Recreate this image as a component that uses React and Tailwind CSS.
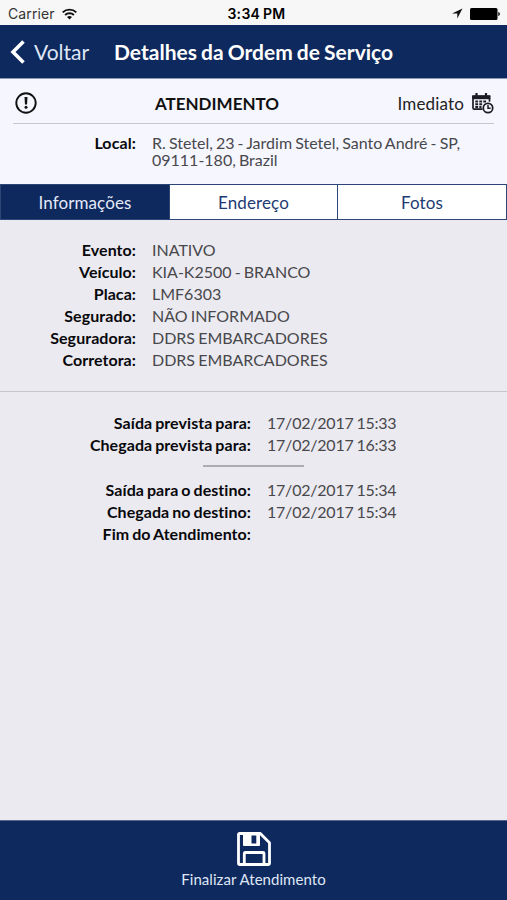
import React, { useState } from "react";

const StatusBar = () => (
  <div className="h-[25px] shrink-0 grid grid-cols-[1fr_auto_1fr] items-center pl-2 pr-[7px] pt-[2px] bg-[#f7f7f7] font-['Inter','Liberation_Sans',sans-serif] text-[14px] leading-4 text-black">
    <div className="flex items-center gap-[7px]">
      <span className="text-[#333] tracking-[0.1px]">Carrier</span>
      <svg width="15" height="12" viewBox="0 0 15 12" fill="none" stroke="#111" strokeWidth="1.9">
        <path d="M.7 4.4a9.8 9.8 0 0 1 13.6 0" />
        <path d="M3.1 7a6.4 6.4 0 0 1 8.8 0" />
        <path d="M7.5 11.6 5 9.1a3.6 3.6 0 0 1 5 0z" fill="#111" stroke="none" />
      </svg>
    </div>
    <span className="text-center pl-[5px] whitespace-nowrap font-semibold tracking-[0.3px]">3:34 PM</span>
    <div className="flex items-center justify-end gap-[7px]">
      <svg width="11" height="11" viewBox="0 0 11 11">
        <path d="M10.5.5 0 5.600h5.300v5z" fill="#111" />
      </svg>
      <svg width="30" height="12" viewBox="0 0 30 12">
        <rect x="0" y="0" width="27.5" height="12" rx="1.5" fill="#000" />
        <path d="M28.3 4c2 .4 2 3.600 0 4z" fill="#000" />
      </svg>
    </div>
  </div>
);

const CalendarClock = () => (
  <svg width="22" height="21" viewBox="0 0 22 21" fill="none" stroke="#1c1c22">
    <path d="M10.500 16.200H2.300a1.300 1.300 0 0 1-1.300-1.300V3.500h16.500v5.200" strokeWidth="1.7" />
    <path d="M.3 2.200h18v4H.3z" fill="#1c1c22" stroke="none" />
    <path d="M4.500 0v4M14 0v4" strokeWidth="2.200" />
    <path d="M3.300 8.500h2.800M7.300 8.500h2.800M11.300 8.500h2.800M3.300 11.200h2.800M7.300 11.200h2.800M3.300 13.900h2.800M7.300 13.900h2.200" strokeWidth="2" />
    <circle cx="16" cy="15" r="4.700" strokeWidth="1.700" />
    <path d="M16 12v3.200h2.600" strokeWidth="1.500" />
  </svg>
);

const SaveIcon = () => (
  <svg width="34" height="34" viewBox="0 0 34 34" fill="none" stroke="#fff" strokeWidth="2.800" strokeLinejoin="round">
    <path d="M1.500 2.500a1 1 0 0 1 1-1h20.800l9.200 9.200v20.800a1 1 0 0 1-1 1h-29a1 1 0 0 1-1-1z" />
    <path d="M7.300 32V21.500a1 1 0 0 1 1-1h17.700a1 1 0 0 1 1 1V32" />
    <path fillRule="evenodd" d="M6 1h17v12a1 1 0 0 1-1 1H7a1 1 0 0 1-1-1zM14.500 3.500v8h4.800v-8z" fill="#fff" stroke="none" />
  </svg>
);

const Row = ({ label, value, wide }) => (
  <div className="flex gap-4 leading-[22px]">
    <span className={`shrink-0 text-right font-bold tracking-[0.06px] text-[#08080c] ${wide ? "w-[251px]" : "w-[136px]"}`}>
      {label}:
    </span>
    <span className={`text-[#48484c] ${wide ? "tracking-[-0.22px]" : ""}`}>{value}</span>
  </div>
);

const App = () => {
  const [activeTab, setActiveTab] = useState("Informações");

  const tabs = ["Informações", "Endereço", "Fotos"];

  const details = [
    { label: "Evento", value: "INATIVO" },
    { label: "Veículo", value: "KIA-K2500 - BRANCO" },
    { label: "Placa", value: "LMF6303" },
    { label: "Segurado", value: "NÃO INFORMADO" },
    { label: "Seguradora", value: "DDRS EMBARCADORES" },
    { label: "Corretora", value: "DDRS EMBARCADORES" },
  ];

  const planned = [
    { label: "Saída prevista para", value: "17/02/2017 15:33" },
    { label: "Chegada prevista para", value: "17/02/2017 16:33" },
  ];

  const actual = [
    { label: "Saída para o destino", value: "17/02/2017 15:34" },
    { label: "Chegada no destino", value: "17/02/2017 15:34" },
    { label: "Fim do Atendimento", value: "" },
  ];

  return (
    <div className="w-full h-[900px] flex flex-col overflow-hidden bg-[#ebeaf0] font-['Lato',sans-serif] text-base [font-variant-ligatures:none] [word-spacing:-1px]">
      <StatusBar />

      {/* Navigation */}
      <header className="h-[54px] shrink-0 flex items-center pl-[10px] bg-[#0e295d] border-b border-[#8b98b8] text-white">
        <button className="w-[104px] flex items-center gap-[9px] text-[21px] text-[#dfe6f5] cursor-pointer">
          <svg width="15" height="24" viewBox="0 0 15 24" fill="none" stroke="#fff" strokeWidth="3.600">
            <path d="M13.500 1.500 3 12l10.500 10.500" />
          </svg>
          Voltar
        </button>
        <h1 className="text-[21px] font-bold whitespace-nowrap">Detalhes da Ordem de Serviço</h1>
      </header>

      {/* Order summary */}
      <section className="h-[105px] shrink-0 px-[13px] bg-[#f6f6ff]">
        <div className="h-[45px] grid grid-cols-[1fr_auto_1fr] items-center pt-1 border-b border-[#c6c6ce]">
          <svg className="ml-[2px]" width="22" height="22" viewBox="0 0 22 22" fill="none" stroke="#111">
            <circle cx="11" cy="11" r="9.700" strokeWidth="1.900" />
            <path d="M9.500 5h3l-.5 7.500h-2z" fill="#111" stroke="none" />
            <circle cx="11" cy="15.300" r="1.500" fill="#111" stroke="none" />
          </svg>
          <span className="text-[17px] font-bold text-[#111] -ml-[73px] pt-px">ATENDIMENTO</span>
          <div className="flex items-center justify-end gap-2 text-[17px] tracking-[0.15px] text-[#222]">
            <span className="pt-px">Imediato</span>
            <CalendarClock />
          </div>
        </div>
        <div className="flex gap-4 pt-[10px] leading-[17px]">
          <span className="w-[123px] shrink-0 text-right font-bold tracking-[0.1px] text-[#08080c]">Local:</span>
          <p className="w-[325px] text-[#48484c]">
            R. Stetel, 23 - Jardim Stetel, Santo André - SP, 09111-180, Brazil
          </p>
        </div>
      </section>

      <nav className="h-[36px] shrink-0 grid grid-cols-[169px_1fr_1fr] border border-[#2c4676] bg-white divide-x divide-[#2c4676]">
        {tabs.map((tab) => (
          <button
            key={tab}
            onClick={() => setActiveTab(tab)}
            className={`text-[17px] pt-[2px] tracking-[0.1px] cursor-pointer ${activeTab === tab ? "bg-[#0e295d] text-[#e4eafa]" : "text-[#1d3a73]"}`}
          >
            {tab}
          </button>
        ))}
      </nav>

      <main className="flex-1">
        <div className="h-[172px] pt-[19px] border-b border-[#c6c5cb]">
          {details.map((item) => (
            <Row key={item.label} {...item} />
          ))}
        </div>
        <div className="pt-[20px]">
          {planned.map((item) => (
            <Row key={item.label} {...item} wide />
          ))}
          <div className="w-[101px] h-[2px] mt-[9px] mb-[12px] mx-auto bg-[#acabb0]" />
          {actual.map((item) => (
            <Row key={item.label} {...item} wide />
          ))}
        </div>
      </main>

      <footer className="h-[80px] shrink-0 bg-[#0e295d] border-t border-[#56678f]">
        <button className="w-full flex flex-col items-center pt-[11px] gap-[3px] text-[15px] leading-5 tracking-[0.05px] text-[#dfe6f5] cursor-pointer">
          <SaveIcon />
          Finalizar Atendimento
        </button>
      </footer>
    </div>
  );
};

export default App;
